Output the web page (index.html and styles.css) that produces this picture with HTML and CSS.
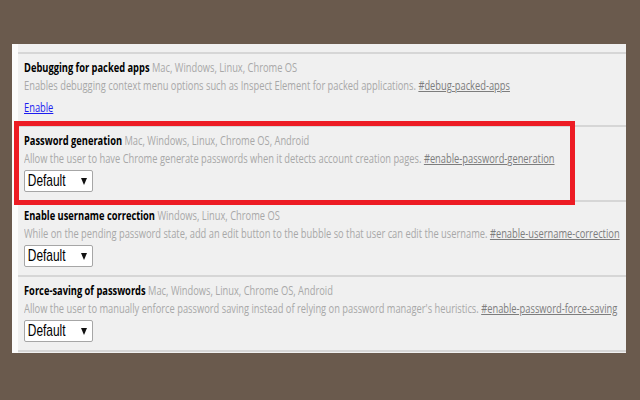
FILE: index.html
```
<!DOCTYPE html>
<html>
<head>
<meta charset="utf-8">
<link rel="stylesheet" href="styles.css">
</head>
<body>
<div class="panel">
  <div class="row">
    <div class="line title"><b>Debugging for packed apps</b> <span class="plat">Mac, Windows, Linux, Chrome OS</span></div>
    <div class="line desc">Enables debugging context menu options such as Inspect Element for packed applications. <a class="flag">#debug-packed-apps</a></div>
    <div class="line action"><a class="enable">Enable</a></div>
  </div>
  <div class="row">
    <div class="line title"><b>Password generation</b> <span class="plat">Mac, Windows, Linux, Chrome OS, Android</span></div>
    <div class="line desc">Allow the user to have Chrome generate passwords when it detects account creation pages. <a class="flag">#enable-password-generation</a></div>
    <div class="sel"><span class="sel-text">Default</span><span class="arrow"></span></div>
  </div>
  <div class="row">
    <div class="line title"><b>Enable username correction</b> <span class="plat">Windows, Linux, Chrome OS</span></div>
    <div class="line desc">While on the pending password state, add an edit button to the bubble so that user can edit the username. <a class="flag">#enable-username-correction</a></div>
    <div class="sel"><span class="sel-text">Default</span><span class="arrow"></span></div>
  </div>
  <div class="row last">
    <div class="line title"><b>Force-saving of passwords</b> <span class="plat">Mac, Windows, Linux, Chrome OS, Android</span></div>
    <div class="line desc">Allow the user to manually enforce password saving instead of relying on password manager's heuristics. <a class="flag">#enable-password-force-saving</a></div>
    <div class="sel"><span class="sel-text">Default</span><span class="arrow"></span></div>
  </div>
  <div class="highlight"></div>
</div>
</body>
</html>
```
FILE: styles.css
```
html, body {
  margin: 0;
  padding: 0;
}
body {
  background: #6a5a4d;
  width: 640px;
  height: 400px;
  overflow: hidden;
  font-family: "Open Sans", "Liberation Sans", sans-serif;
}
.panel {
  position: relative;
  margin: 44px 0 0 12px;
  width: 608px;
  padding-top: 8px;
  padding-bottom: 1px;
  background: #f0f0f0;
  border-left: 6px solid #fbfbfb;
}
.row {
  border-top: 2px solid #d6d6d6;
  padding: 5px 0 8px 6px;
}
.row.last {
  border-bottom: 2px solid #d6d6d6;
}
.line {
  height: 18px;
  line-height: 18px;
  font-size: 12.5px;
  white-space: nowrap;
  transform: scaleX(0.745);
  transform-origin: 0 50%;
}
.title b {
  color: #000;
  font-weight: 700;
}
.plat {
  color: #a8a8a8;
}
.desc {
  color: #a8a8a8;
}
.flag {
  color: #7d7d7d;
  text-decoration: underline;
}
.action {
  margin-top: 4px;
}
.enable {
  color: #1c1cf0;
  text-decoration: underline;
}
.sel {
  margin-top: 2px;
  width: 69px;
  height: 22px;
  box-sizing: border-box;
  border: 1px solid #a6a6a6;
  border-radius: 2px;
  background: #fff;
  display: flex;
  align-items: center;
}
.sel-text {
  display: block;
  width: 52px;
  padding-left: 4px;
  font-family: "Liberation Sans", Arial, sans-serif;
  font-size: 17px;
  line-height: 20px;
  color: #000;
  transform: scaleX(0.7);
  transform-origin: 0 50%;
}
.arrow {
  width: 0;
  height: 0;
  border-left: 3px solid transparent;
  border-right: 3px solid transparent;
  border-top: 7px solid #111;
}
.highlight {
  position: absolute;
  left: -4px;
  top: 77px;
  width: 561px;
  height: 84px;
  box-sizing: border-box;
  border: 5px solid #ed1c24;
}
```
